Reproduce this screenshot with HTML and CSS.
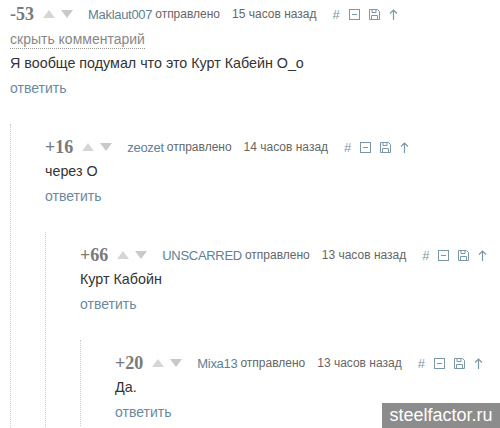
FILE: index.html
```html
<!DOCTYPE html>
<html lang="ru">
<head>
  <meta charset="UTF-8" />
  <title>Комментарии</title>
  <link rel="stylesheet" href="styles.css">
</head>
<body>

<div class="comment">
  <div class="head">
    <span class="rating">-53</span>
    <span class="vote"><i class="up"></i><i class="down"></i></span>
    <span class="user">Maklaut007</span>
    <span class="sent">отправлено</span>
    <span class="time">15 часов назад</span>
    <span class="tools">
      <span class="hash">#</span>
      <svg width="11" height="11" viewBox="0 0 11 11"><rect x="0.5" y="0.5" width="10" height="10" fill="none" stroke="currentColor"/><path d="M3 5.5h5" stroke="currentColor"/></svg>
      <svg width="11" height="11" viewBox="0 0 11 11"><path d="M0.5 0.5h8l2 2v8h-10z" fill="none" stroke="currentColor"/><path d="M3 0.5v3h4v-3M2.5 10.5v-4h6v4" fill="none" stroke="currentColor"/></svg>
      <svg width="9" height="11" viewBox="0 0 9 11"><path d="M4.5 11V1.5M1 4.5l3.5-3.5 3.5 3.5" fill="none" stroke="currentColor" stroke-width="1.2"/></svg>
    </span>
  </div>
  <a class="hide">скрыть комментарий</a>
  <div class="text">Я вообще подумал что это Курт Кабейн О_о</div>
  <a class="reply">ответить</a>

  <div class="children">
    <div class="comment">
      <div class="head">
        <span class="rating">+16</span>
        <span class="vote"><i class="up"></i><i class="down"></i></span>
        <span class="user">zeozet</span>
        <span class="sent">отправлено</span>
        <span class="time">14 часов назад</span>
        <span class="tools">
          <span class="hash">#</span>
          <svg width="11" height="11" viewBox="0 0 11 11"><rect x="0.5" y="0.5" width="10" height="10" fill="none" stroke="currentColor"/><path d="M3 5.5h5" stroke="currentColor"/></svg>
          <svg width="11" height="11" viewBox="0 0 11 11"><path d="M0.5 0.5h8l2 2v8h-10z" fill="none" stroke="currentColor"/><path d="M3 0.5v3h4v-3M2.5 10.5v-4h6v4" fill="none" stroke="currentColor"/></svg>
          <svg width="9" height="11" viewBox="0 0 9 11"><path d="M4.5 11V1.5M1 4.5l3.5-3.5 3.5 3.5" fill="none" stroke="currentColor" stroke-width="1.2"/></svg>
        </span>
      </div>
      <div class="text">через О</div>
      <a class="reply">ответить</a>

      <div class="children">
        <div class="comment">
          <div class="head">
            <span class="rating">+66</span>
            <span class="vote"><i class="up"></i><i class="down"></i></span>
            <span class="user">UNSCARRED</span>
            <span class="sent">отправлено</span>
            <span class="time">13 часов назад</span>
            <span class="tools">
              <span class="hash">#</span>
              <svg width="11" height="11" viewBox="0 0 11 11"><rect x="0.5" y="0.5" width="10" height="10" fill="none" stroke="currentColor"/><path d="M3 5.5h5" stroke="currentColor"/></svg>
              <svg width="11" height="11" viewBox="0 0 11 11"><path d="M0.5 0.5h8l2 2v8h-10z" fill="none" stroke="currentColor"/><path d="M3 0.5v3h4v-3M2.5 10.5v-4h6v4" fill="none" stroke="currentColor"/></svg>
              <svg width="9" height="11" viewBox="0 0 9 11"><path d="M4.5 11V1.5M1 4.5l3.5-3.5 3.5 3.5" fill="none" stroke="currentColor" stroke-width="1.2"/></svg>
            </span>
          </div>
          <div class="text">Курт Кабойн</div>
          <a class="reply">ответить</a>

          <div class="children">
            <div class="comment">
              <div class="head">
                <span class="rating">+20</span>
                <span class="vote"><i class="up"></i><i class="down"></i></span>
                <span class="user">Mixa13</span>
                <span class="sent">отправлено</span>
                <span class="time">13 часов назад</span>
                <span class="tools">
                  <span class="hash">#</span>
                  <svg width="11" height="11" viewBox="0 0 11 11"><rect x="0.5" y="0.5" width="10" height="10" fill="none" stroke="currentColor"/><path d="M3 5.5h5" stroke="currentColor"/></svg>
                  <svg width="11" height="11" viewBox="0 0 11 11"><path d="M0.5 0.5h8l2 2v8h-10z" fill="none" stroke="currentColor"/><path d="M3 0.5v3h4v-3M2.5 10.5v-4h6v4" fill="none" stroke="currentColor"/></svg>
                  <svg width="9" height="11" viewBox="0 0 9 11"><path d="M4.5 11V1.5M1 4.5l3.5-3.5 3.5 3.5" fill="none" stroke="currentColor" stroke-width="1.2"/></svg>
                </span>
              </div>
              <div class="text">Да.</div>
              <a class="reply">ответить</a>
            </div>
          </div>
        </div>
      </div>
    </div>
  </div>
</div>

<div class="watermark">steelfactor.ru</div>

</body>
</html>
```

FILE: styles.css
```css
body {
  margin: 0;
  padding: 4px 0 0 10px;
  background: #fff;
  font-family: 'Liberation Sans', Arial, sans-serif;
  color: #333;
  overflow: hidden;
  height: 428px;
  box-sizing: border-box;
}
.head {
  display: flex;
  align-items: center;
  height: 20px;
  font-size: 13px;
}
.rating {
  font-family: 'Liberation Serif', serif;
  font-weight: bold;
  font-size: 18px;
  color: #7a7a7a;
  margin-right: 9px;
}
.vote {
  display: flex;
  gap: 6px;
  margin-right: 15px;
}
.vote i {
  width: 0;
  height: 0;
  border-left: 6.5px solid transparent;
  border-right: 6.5px solid transparent;
}
.vote .up {
  border-bottom: 8px solid #d6d6d6;
}
.vote .down {
  border-top: 8px solid #c6cacd;
}
.user {
  color: #5e8196;
  margin-right: 3px;
  letter-spacing: -0.3px;
}
.sent {
  color: #666;
  font-size: 12px;
  margin-right: 12px;
}
.time {
  color: #666;
  font-size: 12px;
}
.tools {
  display: flex;
  align-items: center;
  gap: 9px;
  margin-left: 16px;
  color: #7b98a8;
}
.hash {
  font-size: 13px;
}
.hide {
  display: inline-block;
  margin-top: 7px;
  font-size: 14px;
  color: #888;
  border-bottom: 1px dotted #999;
  line-height: 17px;
}
.text {
  font-size: 14.3px;
  line-height: 24px;
  margin-top: 2px;
}
.reply {
  display: block;
  font-size: 14px;
  color: #6a8aa0;
  line-height: 26px;
}
.children {
  margin-top: 23px;
  padding: 13px 0 1px 34px;
  border-left: 1px dotted #ccc;
}
.watermark {
  position: absolute;
  right: 0;
  bottom: 0;
  width: 118px;
  height: 25px;
  background: #8c8c8c;
  color: #fff;
  font-size: 18px;
  line-height: 25px;
  text-align: center;
}
```
